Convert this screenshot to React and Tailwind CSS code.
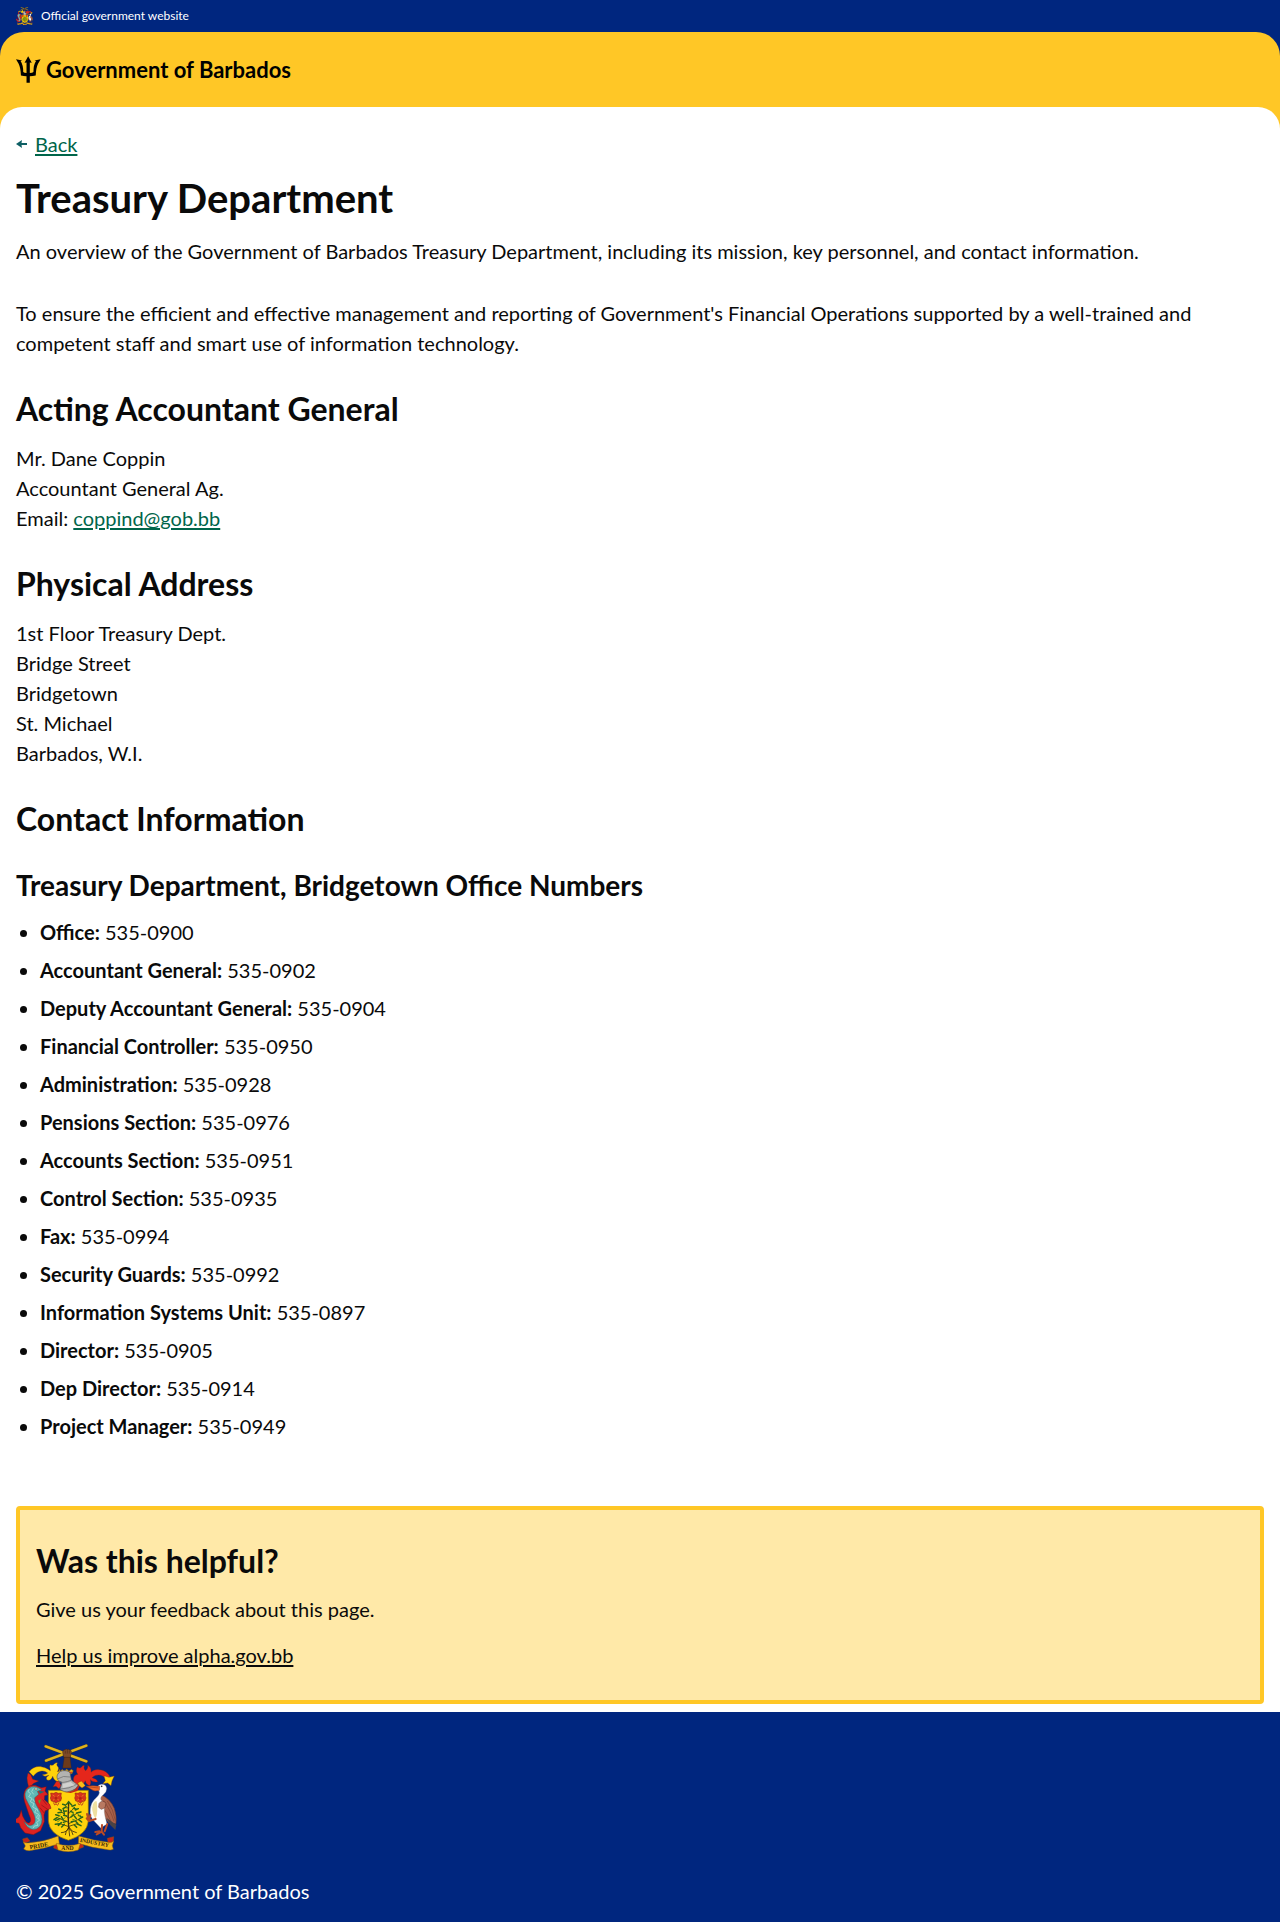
const PHONE_NUMBERS = [
  ["Office:", "535-0900"],
  ["Accountant General:", "535-0902"],
  ["Deputy Accountant General:", "535-0904"],
  ["Financial Controller:", "535-0950"],
  ["Administration:", "535-0928"],
  ["Pensions Section:", "535-0976"],
  ["Accounts Section:", "535-0951"],
  ["Control Section:", "535-0935"],
  ["Fax:", "535-0994"],
  ["Security Guards:", "535-0992"],
  ["Information Systems Unit:", "535-0897"],
  ["Director:", "535-0905"],
  ["Dep Director:", "535-0914"],
  ["Project Manager:", "535-0949"],
];

const ADDRESS = ["1st Floor Treasury Dept.", "Bridge Street", "Bridgetown", "St. Michael", "Barbados, W.I."];

function Flower({ x }) {
  return (
    <g transform={`translate(${x} 190)`}>
      <path
        d="M-16-16l9 1 7-3 7 3 9-1-1 9 2 6-3 9-8 2-6 5-6-5-8-2-3-9 2-6z"
        fill="#d8321c"
        stroke="#8f2410"
        strokeWidth="1.5"
      />
      <path d="M-10-10l6 4M10-10l-6 4M-9 6l5-4M9 6l-5-4" stroke="#f0a01c" strokeWidth="2" />
      <circle r="4" fill="#b3260f" />
      <path d="M-8 12l4 8 4-3 5 4 4-9" fill="none" stroke="#c8501c" strokeWidth="3" />
    </g>
  );
}

function CoatOfArms({ className }) {
  return (
    <svg viewBox="18 27 303 324" className={className} role="img" aria-label="Barbados coat of arms">
      {/* crossed sugar canes and raised arm */}
      <g strokeLinecap="round">
        <path d="M108 77l121-45M107 34l122 45" stroke="#6f5510" strokeWidth="9" />
        <path d="M108 77l121-45M107 34l122 45" stroke="#dfb31f" strokeWidth="7" />
      </g>
      <path d="M158 99l5-34h17l4 34z" fill="#6b3a1c" stroke="#3c200f" />
      <path d="M158 52q0-8 7-8 4-4 7 0 4-3 6 1 7 0 6 7l-3 15h-20z" fill="#7d4a28" stroke="#3c200f" strokeWidth="1.5" />
      <path d="M166 47v9M172 46v10M178 48v8" stroke="#3c200f" strokeWidth="1.2" />

      {/* mantling */}
      <g stroke="#7a2a0a" strokeWidth="1" strokeLinejoin="round">
        <path
          d="M148 140c-14 0-18-10-20-16-2 8-8 12-14 12-5-1-6-6-4-10 2-3 6-2 6-5-8 4-14 3-19-2 6 0 12-1 16-5-8-6-17-8-26-4-8 3-13 8-17 14l-13-14c12-14 26-18 40-14 10 2 17 6 24 11 0-7-4-12 0-18 4 3 8 2 11-1 3-4 7-6 11-4-4 4-3 8 1 11 3 4 2 10-2 15 6-3 14-3 18 4-4 4-10 5-15 6 8 2 12 8 13 16z"
          fill="#ffd20a"
        />
        <path d="M54 114l8 5 6 14 18 5-15 7-14 13-4-14-2-15z" fill="#e5261b" />
        <path d="M140 138l8 2 5 12-6 9-9-7-9 1z" fill="#e5261b" />
        <path
          d="M190 132c2-10 6-13 14-14-6-6-6-14-2-22 4 4 9 4 12 1 3-4 5-7 9-5-2 6-1 12 4 15 5-4 8-10 6-16 9 5 11 12 10 21 6-6 14-9 24-8 18 1 28 10 34 24l-11 9c-6-12-14-17-24-17-7 0-14 2-20 8 8 2 14 5 17 12-8 2-16 0-22-6 2 8 2 12-2 18-8-4-12-8-13-15-4 8-8 14-16 16-12 1-20-9-20-21z"
          fill="#e5261b"
        />
        <path d="M282 122l15 5 16-4-7 15-3 14-10-8-15 2 8-9z" fill="#ffd20a" />
        <path d="M203 144l11-6 6 6 6 8-10 7-8-6z" fill="#f8bd18" />
      </g>
      <path
        d="M147 102l4 7 6-6 6 6 7-7 7 7 7-6 6 4-4 9h-39z"
        fill="#e8b414"
        stroke="#7a4a0a"
        strokeWidth="1.5"
      />
      <path d="M150 112h36" stroke="#d9251a" strokeWidth="3" />

      {/* shield */}
      <path d="M115 166h120v92q-3 40-60 58-57-18-60-58z" fill="#ffd20c" stroke="#8a6708" strokeWidth="2" />
      <path d="M160 170l30-2 10-18 8 4-6 14-20 6z" fill="#c22318" />

      {/* helmet */}
      <path
        d="M142 120c4-10 14-14 22-13 10 0 18 4 17 12l3 16c6 6 14 8 20 16-6 12-16 16-26 18-10 4-20 0-28-6 2-8 6-14 5-22-10-2-16-10-13-21z"
        fill="#b3b3b1"
        stroke="#555"
        strokeWidth="2"
      />
      <path d="M142 132q18-12 38-6M146 141q14 4 37-5M152 162q26 0 48-14" fill="none" stroke="#666" strokeWidth="2" />
      <path d="M158 147l24-6 12 10-36 8z" fill="#d2d2cf" />

      <Flower x={138} />
      <Flower x={211} />

      {/* bearded fig tree */}
      <g fill="none" strokeLinecap="round">
        <path d="M176 205q-3 40 0 74" stroke="#3b2a10" strokeWidth="4" />
        <path
          d="M176 250l-23-21M176 262l-34-14M176 236l18-19M176 250l28-17M176 266l34-15M176 222l-12-12M177 274l24-8M174 274l-24-8"
          stroke="#3f3a12"
          strokeWidth="2.5"
        />
        <path
          d="M176 278q-3 14-22 15M176 278q-10 12-10 21M177 278q0 14 2 25M178 278q6 13 21 15M177 280q10 8 12 19"
          stroke="#3b2a10"
          strokeWidth="2.5"
        />
        <path
          d="M176 200l-6 8M177 202l8 8M166 210l-8-2M168 216l-9 5M186 214l10-4M190 220l9 3M154 226l-8-4M155 232l-11 1M163 235l-3-11M148 242l-11-3M150 251l-13 5M141 248l-9 6M160 255l-6-10M196 225l9-4M200 234l13-3M205 240l9 6M193 243l6 8M210 250l8-4M206 254l9 7M197 259l7 7M154 263l-9 8M148 266l-12 2M163 268l-8 8M202 267l11 5M193 270l7 7M170 228l-8 1M181 229l8 3M170 243l-9-2M183 246l7-7M168 259l-8 3M184 260l8-1"
          stroke="#28651b"
          strokeWidth="4.5"
        />
        <path
          d="M151 240l-5 4M165 248l-5 5M188 253l6 2M207 243l5-2M174 216l-4 3M186 238l5-3M143 260l5-3"
          stroke="#5c8f20"
          strokeWidth="3"
        />
      </g>

      {/* dolphin */}
      <path
        d="M50 159q8-10 26-8l18 7 15-3-4 13 9 11-10 3-1 12 16 14 4 12-17 7-4 13 1 20-11 27-22 12-25-5-13-16-5-13-12-2q-3-2-6-10 13-1 19-9l6-18 4 17 7 13q5 10 12 8 10-5 0-25l-13-38q-8-27 7-43z"
        fill="#db2222"
        stroke="#7b1111"
        strokeWidth="1.5"
      />
      <path
        d="M50 164q13-13 30-8l16 8-14 5 4 9-12 10q-2 13 7 26 15 22 15 39 0 22-17 29-14 5-27-7l-10-15 14 11q15 2 19-11 3-12-8-32-14-25-20-38-5-14 3-26z"
        fill="#5fb7b6"
        stroke="#1d6d78"
        strokeWidth="1.5"
      />
      <path
        d="M58 162l-4 8 8 6-6 9 10 5-5 10 11 6-4 10 11 6-5 10 12 6-7 9 10 8-9 7 4 9-11 2-4 7M70 160l-5 10 6 8M68 192l6 8M80 220l4 10M88 240l-2 12"
        fill="none"
        stroke="#b9e2de"
        strokeWidth="2"
      />
      <circle cx="78" cy="162" r="3.5" fill="#f5e9c0" stroke="#222" />
      <path d="M86 167l18 3-14 6z" fill="#1d6d78" />
      <path d="M84 197l9-5-4 15z" fill="#4f9d33" />
      <path d="M98 194l12 15M94 210l22 15M90 218l14 18" stroke="#8e1414" strokeWidth="2" />

      {/* pelican */}
      <path d="M270 178q30 12 43 42 8 23 5 47l-22-4-32-42z" fill="#a9614a" stroke="#5b2d20" strokeWidth="1.5" />
      <path
        d="M280 197q20 24 32 62M275 212q17 22 28 47M292 198q18 25 24 58"
        fill="none"
        stroke="#804230"
        strokeWidth="2"
      />
      <path d="M289 248l30 21-3 16-16-16z" fill="#4a4346" />
      <path
        d="M260 165q2-16 15-17 14 0 15 13 0 10-10 18-11 8-7 16 12 7 10 22-1 15 2 27l6 23-19 12-19-20q-15-13-12-37 2-20 16-32 12-11 11-19-2-6-8-6z"
        fill="#fff"
        stroke="#8a8a8a"
        strokeWidth="1"
      />
      <path d="M255 199q-10 10-8 27 2 16 10 26 8-20 3-53z" fill="#efe0a0" />
      <path d="M267 206q8-14 21-2l-3 14-11 5-8-6z" fill="#b97961" stroke="#5b2d20" strokeWidth="1.5" />
      <path d="M228 154q20-4 41 0l-1 12q-15 6-26-4z" fill="#ee6b2c" stroke="#8a2f12" strokeWidth="1.5" />
      <path d="M230 155l36 4" stroke="#8a2f12" strokeWidth="1.5" />
      <circle cx="275" cy="154" r="2.5" fill="#222" />
      <path
        d="M257 252l-20 6-7-8M237 258l-6-21M237 257l4-17M276 270l-1 20-15 8M275 290l7 9M268 289l-12 2M292 267l-8 22"
        fill="none"
        stroke="#bb4a24"
        strokeWidth="6"
        strokeLinecap="round"
        strokeLinejoin="round"
      />

      {/* motto scroll */}
      <g stroke="#8a5a0a" strokeWidth="1.5">
        <path d="M38 312l14-4 8 10-18 8zM292 310l19-5-1 16-15 5z" fill="#c8251a" />
        <path d="M134 324l16 7-6 13-13-5zM201 331l15-9 5 14-17 7z" fill="#c8251a" />
        <path d="M40 320q7 6 18 3 42-2 87-20l3 23q-41 14-89 21-9 2-18-5l5-9z" fill="#f6bc1b" />
        <path d="M206 303q46 14 88 19 10 2 17-4l-4 14 3 11q-8 4-17 1-44-4-88-19z" fill="#f6bc1b" />
        <path d="M139 325q36 13 72 0l-6 20q-30 10-61 0z" fill="#f6bc1b" />
      </g>
      <g fill="#352407" fontFamily="Liberation Serif, serif" fontSize="18" fontWeight="700" aria-hidden="true">
        <text x="60" y="343" transform="rotate(-10 60 343)">
          PRIDE
        </text>
        <text x="154" y="346" fontSize="17">
          AND
        </text>
        <text x="209" y="320" fontSize="17" transform="rotate(11 209 320)">
          INDUSTRY
        </text>
      </g>
    </svg>
  );
}

function Trident({ className }) {
  return (
    <svg viewBox="18 18 76 81" className={className} aria-hidden="true">
      <path d="M55 18l11 20-6-1v32q8 0 11-3 0-22 8-33l-5-2 19-4-8 14q-6 12-7 36-9 2-18 2v20H50V79q-9 0-17-2-1-24-7-36l-8-14 19 4-5 2q8 12 8 33 3 3 10 3V37l-6 1z" fill="#000" />
    </svg>
  );
}

function BackArrow({ className }) {
  return (
    <svg viewBox="0 0 11 8" className={className} aria-hidden="true">
      <path d="M0 4l6-4-.5 3H11v2H5.500l.5 3z" fill="#0e5f64" />
    </svg>
  );
}

function SectionHeading({ children }) {
  return <h2 className="mt-8 text-[32px] leading-[37px] font-bold">{children}</h2>;
}

export default function App() {
  return (
    <div className="bg-white font-[Lato,sans-serif] text-[20px] leading-[30px] text-[#0a0a0a]">
      <div className="bg-[#00267f]">
        <div className="flex h-8 items-center gap-2 px-4 text-xs text-white">
          <CoatOfArms className="h-[18px] w-[17px]" />
          <span>Official government website</span>
        </div>
        <header className="rounded-t-3xl bg-[#ffc726]">
          <div className="flex h-[75px] items-center px-4">
            <a href="#home" className="flex items-center gap-[5px] text-[22px] leading-[30px] font-bold text-black">
              <Trident className="h-[27px] w-[25px]" />
              <span>Government of Barbados</span>
            </a>
          </div>
          <div className="h-[22px] rounded-t-3xl bg-white" />
        </header>
      </div>

      <main className="px-4 pb-2">
        <a href="#back" className="flex w-fit items-center gap-2 text-[#00654a]">
          <BackArrow className="h-2 w-[11px]" />
          <span className="underline decoration-2 underline-offset-2">Back</span>
        </a>

        <h1 className="mt-4 text-[40px] leading-[46px] font-bold">Treasury Department</h1>
        <p className="mt-[15px]">
          An overview of the Government of Barbados Treasury Department, including its mission, key personnel, and
          contact information.
        </p>
        <p className="mt-8">
          To ensure the efficient and effective management and reporting of Government's Financial Operations supported
          by a well-trained and competent staff and smart use of information technology.
        </p>

        <SectionHeading>Acting Accountant General</SectionHeading>
        <p className="mt-4">
          Mr. Dane Coppin
          <br />
          Accountant General Ag.
          <br />
          Email:{" "}
          <a href="mailto:coppind@gob.bb" className="text-[#00654a] underline decoration-2 underline-offset-2">
            coppind@gob.bb
          </a>
        </p>

        <SectionHeading>Physical Address</SectionHeading>
        <address className="mt-4 not-italic">
          {ADDRESS.map((line) => (
            <div key={line}>{line}</div>
          ))}
        </address>

        <SectionHeading>Contact Information</SectionHeading>
        <h3 className="mt-8 text-[28px] leading-8 font-bold">Treasury Department, Bridgetown Office Numbers</h3>
        <ul className="mt-4 list-disc space-y-2 pl-6">
          {PHONE_NUMBERS.map(([label, number]) => (
            <li key={label}>
              <strong>{label}</strong> {number}
            </li>
          ))}
        </ul>

        <section className="mt-[65px] rounded border-4 border-[#ffc726] bg-[#ffe9a8] px-4 pb-[30px]">
          <SectionHeading>Was this helpful?</SectionHeading>
          <p className="mt-[15px]">Give us your feedback about this page.</p>
          <a href="#feedback" className="mt-4 block w-fit underline decoration-2 underline-offset-2">
            Help us improve alpha.gov.bb
          </a>
        </section>
      </main>

      <footer className="bg-[#00267f] px-4 pt-8 pb-4 text-white">
        <CoatOfArms className="h-[108px] w-[101px]" />
        <p className="mt-6">© 2025 Government of Barbados</p>
      </footer>
    </div>
  );
}
